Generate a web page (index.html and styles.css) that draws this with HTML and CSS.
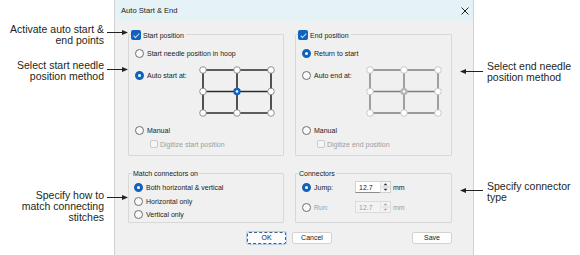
FILE: index.html
```html
<!DOCTYPE html>
<html lang="en">
<head>
    <meta charset="UTF-8">
    <title>Auto Start &amp; End</title>
    <link rel="stylesheet" href="styles.css">
</head>
<body>
<div class="page">
    <!-- Left callouts -->
    <div class="notes notes-left">
        <div class="callout c1">
            <p>Activate auto start &amp;<br>end points</p>
            <svg class="arrow" viewBox="0 0 21 7"><path d="M0 3.5H16" stroke="#222" stroke-width="1"/><path d="M15 1L21 3.5L15 6Z" fill="#222"/></svg>
        </div>
        <div class="callout c2">
            <p>Select start needle<br>position method</p>
            <svg class="arrow" viewBox="0 0 21 7"><path d="M0 3.5H16" stroke="#222" stroke-width="1"/><path d="M15 1L21 3.5L15 6Z" fill="#222"/></svg>
        </div>
        <div class="callout c3">
            <p>Specify how to<br>match connecting<br>stitches</p>
            <svg class="arrow" viewBox="0 0 21 7"><path d="M0 3.5H16" stroke="#222" stroke-width="1"/><path d="M15 1L21 3.5L15 6Z" fill="#222"/></svg>
        </div>
    </div>

    <!-- Dialog -->
    <div class="dialog">
        <div class="titlebar">
            <span>Auto Start &amp; End</span>
            <svg class="close" viewBox="0 0 8 8"><path d="M0.5 0.5L7.5 7.5M7.5 0.5L0.5 7.5" stroke="#222" stroke-width="1"/></svg>
        </div>
        <div class="content">
            <div class="groups">
                <div class="group g-start">
                    <div class="legend"><span class="check on"></span>Start position</div>
                    <div class="opt first"><span class="radio"></span>Start needle position in hoop</div>
                    <div class="auto-row">
                        <div class="opt"><span class="radio on"></span>Auto start at:</div>
                        <svg class="grid" viewBox="0 0 76 51">
                            <path d="M4 4H72M4 25.5H72M4 47H72M4 4V47M38 4V47M72 4V47" stroke="#2b2b2b" stroke-width="1.6" fill="none"/>
                            <g fill="#fff" stroke="#7a7a7a" stroke-width="0.8">
                                <circle cx="4" cy="4" r="3.3"/><circle cx="38" cy="4" r="3.3"/><circle cx="72" cy="4" r="3.3"/>
                                <circle cx="4" cy="25.5" r="3.3"/><circle cx="72" cy="25.5" r="3.3"/>
                                <circle cx="4" cy="47" r="3.3"/><circle cx="38" cy="47" r="3.3"/><circle cx="72" cy="47" r="3.3"/>
                            </g>
                            <circle cx="38" cy="25.5" r="3.7" fill="#0f62be"/>
                            <circle cx="38" cy="25.5" r="1.3" fill="#fff"/>
                        </svg>
                    </div>
                    <div class="opt manual"><span class="radio"></span>Manual</div>
                    <div class="opt sub disabled"><span class="check"></span>Digitize start position</div>
                </div>

                <div class="group g-end">
                    <div class="legend"><span class="check on"></span>End position</div>
                    <div class="opt first"><span class="radio on"></span>Return to start</div>
                    <div class="auto-row">
                        <div class="opt"><span class="radio"></span>Auto end at:</div>
                        <svg class="grid" viewBox="0 0 76 51">
                            <path d="M4 4H72M4 25.5H72M4 47H72M4 4V47M38 4V47M72 4V47" stroke="#7d7d7d" stroke-width="1.4" fill="none"/>
                            <g fill="#fff" stroke="#bdbdbd" stroke-width="0.8">
                                <circle cx="4" cy="4" r="3.3"/><circle cx="38" cy="4" r="3.3"/><circle cx="72" cy="4" r="3.3"/>
                                <circle cx="4" cy="25.5" r="3.3"/><circle cx="72" cy="25.5" r="3.3"/>
                                <circle cx="4" cy="47" r="3.3"/><circle cx="38" cy="47" r="3.3"/><circle cx="72" cy="47" r="3.3"/>
                            </g>
                            <circle cx="38" cy="25.5" r="3.6" fill="#b4b4b4"/>
                            <circle cx="38" cy="25.5" r="1.3" fill="#fff"/>
                        </svg>
                    </div>
                    <div class="opt manual"><span class="radio"></span>Manual</div>
                    <div class="opt sub disabled"><span class="check"></span>Digitize end position</div>
                </div>
            </div>

            <div class="groups lower">
                <div class="group g-match">
                    <div class="legend text">Match connectors on</div>
                    <div class="opt m1"><span class="radio on"></span>Both horizontal &amp; vertical</div>
                    <div class="opt m2"><span class="radio"></span>Horizontal only</div>
                    <div class="opt m3"><span class="radio"></span>Vertical only</div>
                </div>

                <div class="group g-conn">
                    <div class="legend text">Connectors</div>
                    <div class="conn-row first">
                        <div class="opt"><span class="radio on"></span>Jump:</div>
                        <div class="num">12.7</div>
                        <svg class="spin" viewBox="0 0 11 12"><rect x="0" y="0.5" width="10.5" height="11" fill="#f7f7f7" stroke="#cfcfcf"/><path d="M1 6H10" stroke="#cfcfcf"/><path d="M3.5 4.3L5.5 2.3L7.5 4.3ZM3.5 7.7L5.5 9.7L7.5 7.7Z" fill="#333"/></svg>
                        <span class="unit">mm</span>
                    </div>
                    <div class="conn-row second disabled">
                        <div class="opt"><span class="radio"></span>Run:</div>
                        <div class="num">12.7</div>
                        <svg class="spin" viewBox="0 0 11 12"><rect x="0" y="0.5" width="10.5" height="11" fill="#f3f3f3" stroke="#dcdcdc"/><path d="M1 6H10" stroke="#dcdcdc"/><path d="M3.5 4.3L5.5 2.3L7.5 4.3ZM3.5 7.7L5.5 9.7L7.5 7.7Z" fill="#a8a8a8"/></svg>
                        <span class="unit">mm</span>
                    </div>
                </div>
            </div>

            <div class="buttons">
                <button class="btn ok">OK</button>
                <button class="btn cancel">Cancel</button>
                <button class="btn save">Save</button>
            </div>
        </div>
    </div>

    <!-- Right callouts -->
    <div class="notes notes-right">
        <div class="callout c4">
            <svg class="arrow" viewBox="0 0 23 7"><path d="M0 3.5L6 1L6 6Z" fill="#222"/><path d="M5 3.5H23" stroke="#222" stroke-width="1"/></svg>
            <p>Select end needle<br>position method</p>
        </div>
        <div class="callout c5">
            <svg class="arrow" viewBox="0 0 23 7"><path d="M0 3.5L6 1L6 6Z" fill="#222"/><path d="M5 3.5H23" stroke="#222" stroke-width="1"/></svg>
            <p>Specify connector<br>type</p>
        </div>
    </div>
</div>
</body>
</html>
```

FILE: styles.css
```css
* {
    box-sizing: border-box;
}

body {
    margin: 0;
    background-color: #fff;
    font-family: "Liberation Sans", Arial, sans-serif;
    color: #1a1a1a;
}

.page {
    display: flex;
    width: 580px;
    height: 255px;
    overflow: hidden;
}

/* Callouts */
.notes {
    font-size: 10.5px;
    line-height: 11.3px;
    color: #231f20;
}

.notes-left {
    width: 114px;
    flex: none;
}

.notes-right {
    flex: 1;
}

.callout {
    display: flex;
    align-items: flex-start;
    position: relative;
    z-index: 1;
}

.callout p {
    margin: 0;
}

.notes-left .callout {
    justify-content: flex-end;
    text-align: right;
    margin-right: -14px;
}

.notes-left .arrow {
    flex: none;
    width: 21px;
    height: 7px;
    margin-left: 3px;
}

.notes-right .callout {
    margin-left: -14px;
}

.notes-right .arrow {
    flex: none;
    width: 23px;
    height: 7px;
    margin-right: 4px;
}

.c1 { margin-top: 23.5px; }
.c1 .arrow { margin-top: 5.3px; }
.c2 { margin-top: 13.5px; }
.c2 .arrow { margin-top: 6.2px; }
.c3 { margin-top: 107.5px; }
.c3 .arrow { margin-top: 4.8px; }
.c4 { margin-top: 61px; }
.c4 .arrow { margin-top: 6.5px; }
.c5 { margin-top: 97px; }
.c5 .arrow { margin-top: 6px; }

/* Dialog */
.dialog {
    width: 360px;
    flex: none;
    height: 255px;
    background-color: #f0f0f0;
    border-left: 1px solid #d2d2d2;
    border-right: 1px solid #d2d2d2;
    font-size: 7px;
    color: #1a1a1a;
}

.titlebar {
    height: 21px;
    background-color: #e6f3f6;
    display: flex;
    align-items: center;
    justify-content: space-between;
    padding: 0 4px 0 6px;
    font-size: 7.6px;
    color: #222;
}

.close {
    width: 8px;
    height: 8px;
}

.content {
    padding: 13px 21px 0 13px;
}

.groups {
    display: flex;
    gap: 11px;
}

.groups.lower {
    margin-top: 17px;
}

.group {
    border: 1px solid #d8d8d8;
    border-radius: 1px;
}

.g-start, .g-match {
    width: 156px;
}

.g-end, .g-conn {
    width: 157px;
}

.g-start, .g-end {
    padding-bottom: 5px;
}

.legend {
    display: flex;
    align-items: center;
    width: max-content;
    height: 10px;
    margin: -5px 0 0 2px;
    padding-right: 2px;
    background-color: #f0f0f0;
}

.legend .check {
    margin-right: 2px;
}

.legend.text {
    margin: -6px 0 0 3px;
    padding: 0 1px;
}

.g-conn .legend.text {
    margin-left: 2px;
}

.opt {
    display: flex;
    align-items: center;
    height: 12px;
    padding-left: 6px;
    white-space: nowrap;
}

.opt .radio {
    margin-right: 3px;
}

.opt.first {
    margin-top: 7px;
}

.auto-row {
    display: flex;
    align-items: flex-start;
    margin-top: 7px;
}

.auto-row .opt {
    width: 70px;
    margin-top: 3px;
}

.grid {
    width: 76px;
    height: 51px;
    flex: none;
}

.opt.manual {
    margin-top: 7px;
}

.opt.sub {
    margin-top: 2px;
    padding-left: 21px;
}

.opt.sub .check {
    margin-right: 2px;
}

.disabled {
    color: #9d9d9d;
}

/* Match connectors */
.g-match {
    padding-bottom: 2px;
}

.g-match .opt {
    padding-left: 5px;
}

.opt.m1 { margin-top: 3px; }
.opt.m2 { margin-top: 2px; }
.opt.m3 { margin-top: 1px; }

/* Connectors */
.g-conn {
    padding-bottom: 9px;
}

.conn-row {
    display: flex;
    align-items: center;
    height: 12px;
}

.conn-row.first {
    margin-top: 3px;
}

.conn-row.second {
    margin-top: 8px;
}

.conn-row .opt {
    width: 59px;
}

.num {
    width: 25px;
    height: 12px;
    padding-left: 3px;
    line-height: 11px;
    background-color: #fff;
    border: 1px solid #d4d4d4;
    border-bottom-color: #8c8c8c;
    border-right: none;
    color: #1a1a1a;
}

.disabled .num {
    background-color: #f3f3f3;
    border-color: #dcdcdc;
    color: #9d9d9d;
}

.spin {
    width: 11px;
    height: 12px;
}

.unit {
    margin-left: 2px;
}

/* Radio & checkbox */
.radio {
    display: inline-block;
    flex: none;
    width: 9px;
    height: 9px;
    border: 1px solid #6e6e6e;
    border-radius: 50%;
    background-color: #f9f9f9;
}

.radio.on {
    border: 3px solid #0f62be;
    background-color: #fff;
}

.check {
    display: inline-block;
    flex: none;
    position: relative;
    width: 8px;
    height: 8px;
    border: 1px solid #c9c9c9;
    border-radius: 2px;
    background-color: #f6f6f6;
}

.check.on {
    width: 10px;
    height: 10px;
    border: none;
    background-color: #0f62be;
}

.check.on::after {
    content: "";
    position: absolute;
    left: 3.5px;
    top: 1.5px;
    width: 2px;
    height: 5px;
    border-right: 1px solid #cfe0f5;
    border-bottom: 1px solid #cfe0f5;
    transform: rotate(45deg);
}

/* Buttons */
.buttons {
    display: flex;
    margin-top: 9px;
}

.btn {
    width: 40px;
    height: 12px;
    padding: 0;
    font-family: inherit;
    font-size: 7px;
    line-height: 10px;
    color: #1a1a1a;
    background-color: #fdfdfd;
    border: 1px solid #d3d3d3;
    border-radius: 2px;
}

.btn.ok {
    width: 39px;
    margin-left: 119px;
    border: 1px dashed #3d5f8a;
    box-shadow: 0 0 0 1px #b7cde8;
}

.btn.cancel {
    margin-left: 6px;
}

.btn.save {
    margin-left: auto;
}
```
